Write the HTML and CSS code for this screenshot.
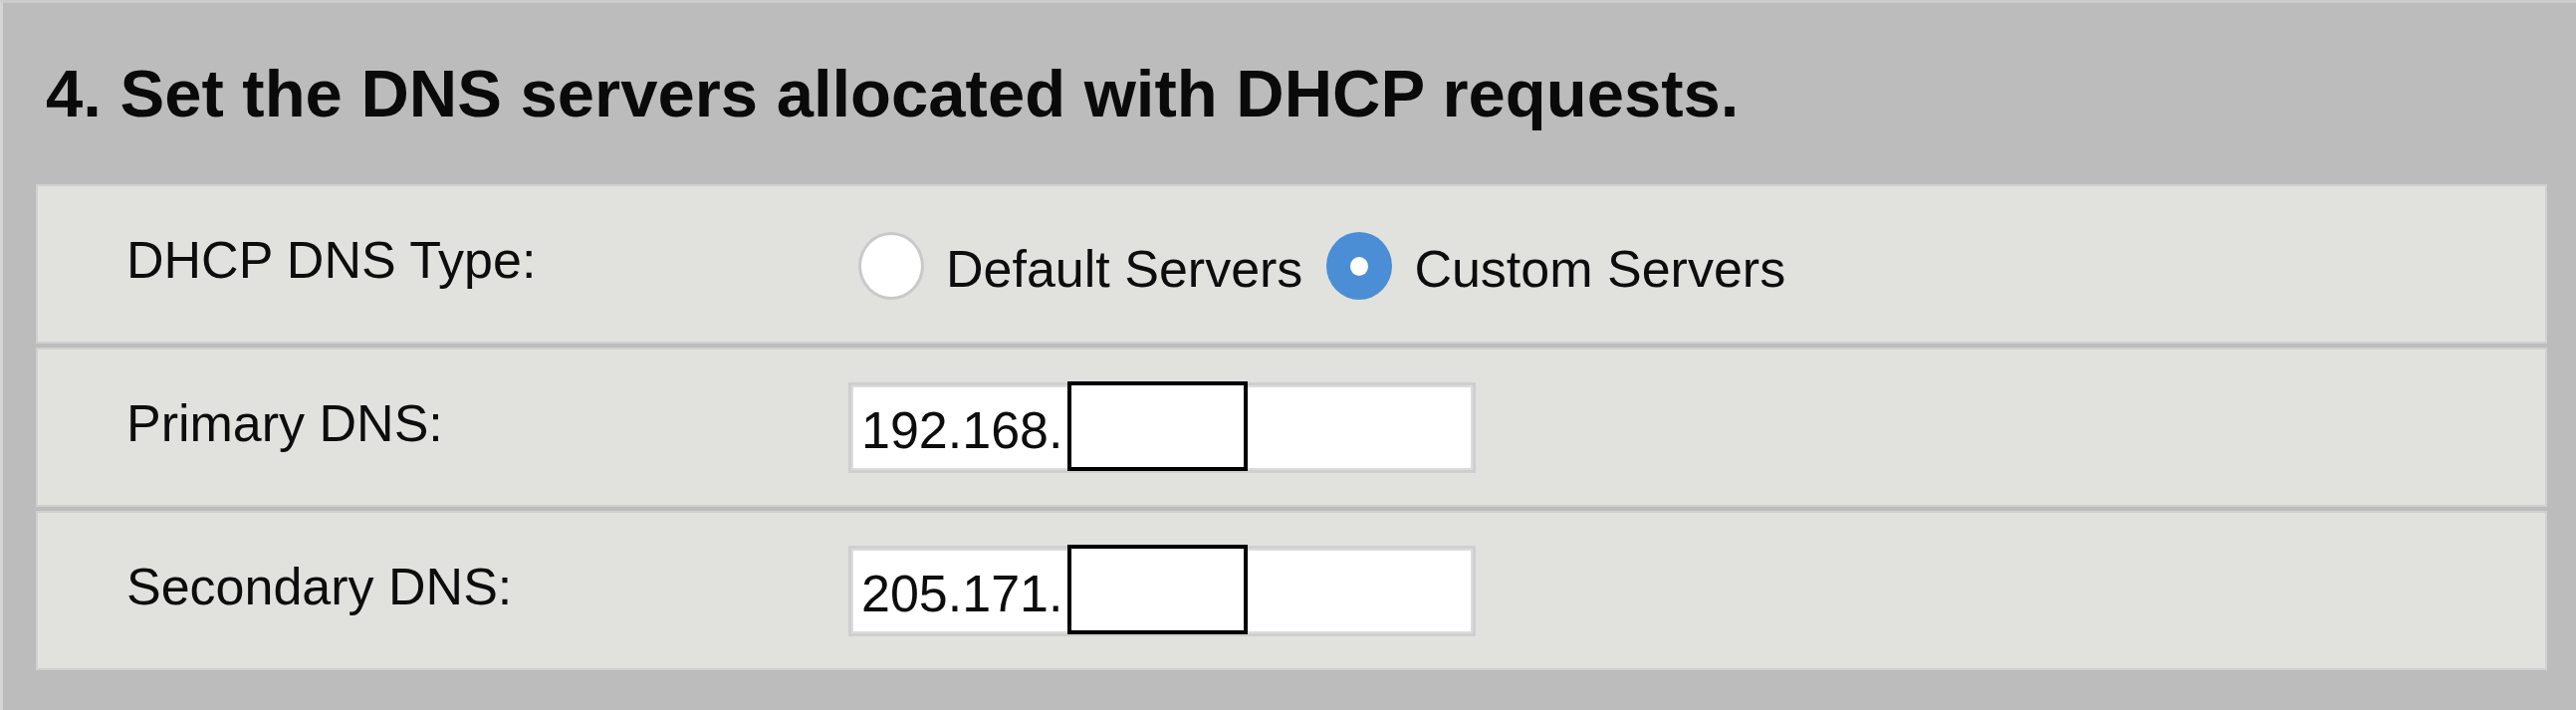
FILE: index.html
```html
<!DOCTYPE html>
<html lang="en">
<head>
<meta charset="utf-8">
<title>DHCP DNS servers</title>
<link rel="stylesheet" href="styles.css">
</head>
<body>
<div class="page">
  <h1 class="section-title">4. Set the DNS servers allocated with DHCP requests.</h1>
  <div class="panel">
    <div class="row">
      <div class="label">DHCP DNS Type:</div>
      <div class="value options">
        <div class="option">
          <span class="radio"></span>
          <span class="option-text">Default Servers</span>
        </div>
        <div class="option">
          <span class="radio checked"></span>
          <span class="option-text">Custom Servers</span>
        </div>
      </div>
    </div>
    <div class="row">
      <div class="label">Primary DNS:</div>
      <div class="value">
        <div class="field">
          <span class="field-text">192.168.</span>
          <span class="redact"></span>
        </div>
      </div>
    </div>
    <div class="row">
      <div class="label">Secondary DNS:</div>
      <div class="value">
        <div class="field">
          <span class="field-text">205.171.</span>
          <span class="redact"></span>
        </div>
      </div>
    </div>
  </div>
</div>
</body>
</html>
```
FILE: styles.css
```css
html, body {
  margin: 0;
  padding: 0;
  background: #bbbcbb;
}
body {
  width: 2587px;
  height: 713px;
  overflow: hidden;
  font-family: "Liberation Sans", Arial, sans-serif;
  color: #0d0d0d;
}
.page {
  box-sizing: border-box;
  height: 713px;
  border-top: 3px solid #cacbca;
  border-left: 3px solid #d4d5d4;
  padding: 52px 29px 0 33px;
}
.section-title {
  margin: 0 0 53px 10px;
  font-size: 67px;
  line-height: 77px;
  font-weight: bold;
  color: #0a0a0a;
}
.panel {
  display: flex;
  flex-direction: column;
  gap: 4px;
}
.row {
  box-sizing: border-box;
  height: 160px;
  background: #e1e2de;
  border: 2px solid #d0d1ce;
  display: grid;
  grid-template-columns: 725px 1fr;
  align-items: center;
  padding-left: 89px;
}
.label {
  font-size: 52px;
  line-height: 60px;
  padding-bottom: 9px;
}
.value {
  display: flex;
  align-items: center;
}
.options {
  gap: 24px;
  padding-left: 10px;
  padding-top: 4px;
}
.option {
  display: flex;
  align-items: center;
  gap: 22px;
}
.option-text {
  font-size: 52px;
  line-height: 60px;
  padding-top: 6px;
}
.radio {
  box-sizing: border-box;
  width: 66px;
  height: 68px;
  border-radius: 50%;
  background: #ffffff;
  border: 3px solid #c9c9c9;
  position: relative;
}
.radio.checked {
  background: #4b8ed5;
  border-color: #4b8ed5;
}
.radio.checked::after {
  content: "";
  position: absolute;
  left: 50%;
  top: 50%;
  width: 18px;
  height: 19px;
  margin: -9px 0 0 -9px;
  border-radius: 50%;
  background: #ffffff;
}
.field {
  box-sizing: border-box;
  position: relative;
  width: 630px;
  height: 91px;
  background: #ffffff;
  border: 3px solid #cfcfcf;
  box-shadow: inset 0 0 0 2px #dcdcdc;
  display: flex;
  align-items: center;
  padding-left: 10px;
  padding-top: 6px;
}
.field-text {
  font-size: 52px;
  line-height: 60px;
  color: #0d0d0d;
}
.redact {
  box-sizing: border-box;
  position: absolute;
  left: 217px;
  top: -4px;
  width: 181px;
  height: 90px;
  border: 4px solid #000;
  background: #fff;
}
```
